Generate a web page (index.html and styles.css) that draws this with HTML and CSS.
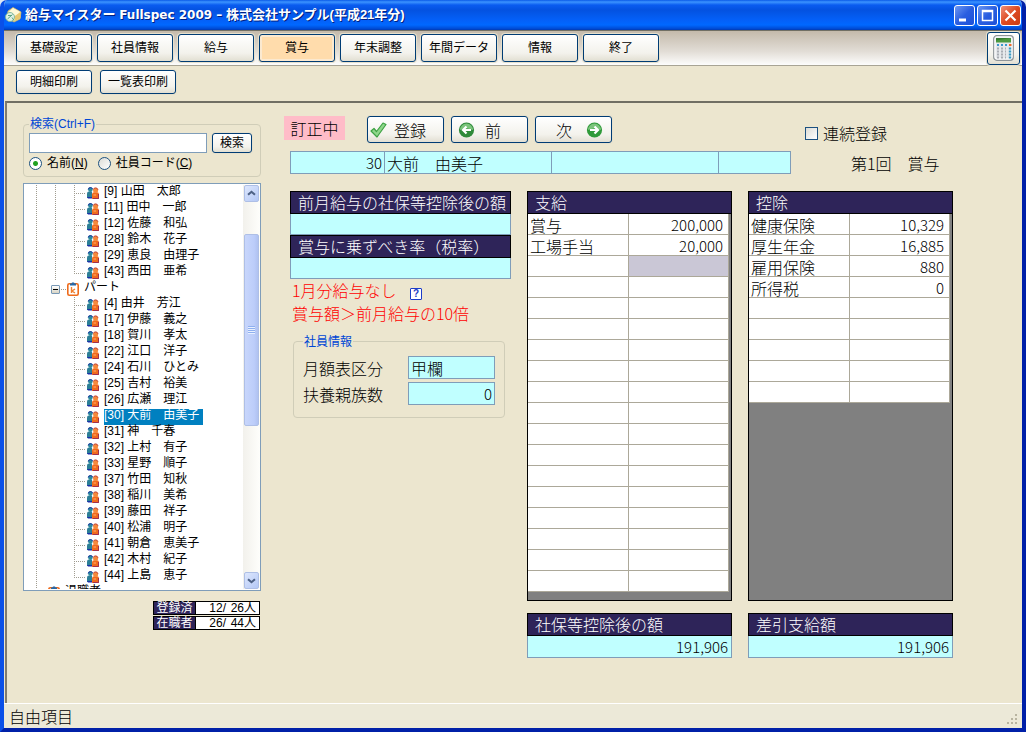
FILE: index.html
```html
<!DOCTYPE html>
<html lang="ja">
<head>
<meta charset="utf-8">
<title>給与マイスター Fullspec 2009</title>
<meta name="viewport" content="width=device-width, initial-scale=1">
<link rel="stylesheet" href="styles.css">
</head>
<body>
<svg class="sprite" aria-hidden="true">
  <symbol id="people" viewBox="0 0 12 12">
    <path d="M0 6.5Q0 4.5 2 4.5H5V11H0Z" fill="#2c7f96"/>
    <path d="M0 10h6v1.5H1Z" fill="#1a2fa8"/>
    <circle cx="3.4" cy="2.6" r="2.3" fill="#2a8a9c"/>
    <path d="M1.2 2.4A2.3 2.3 0 0 1 5.6 2" fill="none" stroke="#1a35a0" stroke-width="1"/>
    <path d="M5 12V7.5Q5 5.3 7.2 5.3H10Q12 5.3 12 7.5V12Z" fill="#f06a1c"/>
    <circle cx="8.6" cy="3.4" r="2.5" fill="#f58a3c"/>
    <path d="M6.2 2.6A2.5 2.5 0 0 1 11 2.8" fill="none" stroke="#c03c2a" stroke-width="1"/>
    <path d="M6.5 8h2.6" stroke="#ffb070" stroke-width="1"/>
    <path d="M11.5 7v4.5H6" fill="none" stroke="#a03050" stroke-width="1"/>
  </symbol>
  <symbol id="clip" viewBox="0 0 12 14">
    <rect x="0.8" y="1.8" width="10.4" height="11.4" rx="1.5" fill="#fff" stroke="#ee6a1a" stroke-width="1.6"/>
    <path d="M3 3.5V1.5H4.5L5 0.5H7L7.500 1.500H9V3.500Z" fill="#2468a8"/>
    <path d="M4.500 5V11M8 7L5 9L8 11" fill="none" stroke="#f08030" stroke-width="1.400"/>
  </symbol>
</svg>

<div class="window">
  <header class="titlebar">
    <svg class="titlebar__icon" viewBox="0 0 17 16" aria-hidden="true">
      <path d="M3 4L8 0.500L16 5L15 12L9 15L2 11Z" fill="#f3e6a0" stroke="#c9b26a" stroke-width="0.800"/>
      <path d="M8 1L15.500 5L10 9L4 5Z" fill="#fff8d8"/>
      <path d="M10 9L15.500 5V11L10 14Z" fill="#e8c870"/>
      <circle cx="5" cy="10" r="4.500" fill="#dff0e4" stroke="#7cb498" stroke-width="0.900"/>
      <path d="M2.500 12L7.500 7.500M3 8.500h4M7 10.500l2 3" stroke="#5aa482" stroke-width="1"/>
    </svg>
    <h1 class="titlebar__text">給与マイスター <span class="titlebar__latin">Fullspec 2009 –</span> 株式会社サンプル(平成21年分)</h1>
    <div class="titlebar__controls">
      <button class="winbtn" type="button" aria-label="最小化"><svg viewBox="0 0 19 19"><path d="M4 14h7" stroke="#fff" stroke-width="3"/></svg></button>
      <button class="winbtn" type="button" aria-label="最大化"><svg viewBox="0 0 19 19"><path d="M4.500 4.500h10v10h-10ZM4 5.500h11" fill="none" stroke="#fff" stroke-width="1.500"/></svg></button>
      <button class="winbtn winbtn--close" type="button" aria-label="閉じる"><svg viewBox="0 0 19 19"><path d="M4.500 4.500L14.500 14.500M14.500 4.500L4.500 14.500" stroke="#fff" stroke-width="2.200"/></svg></button>
    </div>
  </header>

  <nav class="toolbar">
    <button class="btn btn--nav" type="button">基礎設定</button>
    <button class="btn btn--nav" type="button">社員情報</button>
    <button class="btn btn--nav" type="button">給与</button>
    <button class="btn btn--nav btn--active" type="button" aria-current="page">賞与</button>
    <button class="btn btn--nav" type="button">年末調整</button>
    <button class="btn btn--nav" type="button">年間データ</button>
    <button class="btn btn--nav" type="button">情報</button>
    <button class="btn btn--nav" type="button">終了</button>
    <button class="btn btn--calc" type="button" aria-label="電卓">
      <svg viewBox="0 0 21 26" aria-hidden="true">
        <rect x="0.700" y="0.700" width="19.600" height="24.600" rx="3" fill="#e6e9ec" stroke="#8e9498" stroke-width="1.200"/>
        <rect x="2" y="2" width="17" height="22" rx="2" fill="none" stroke="#fff"/>
        <rect x="3" y="3" width="15" height="4.500" fill="#4c9a40"/>
        <path d="M3 5.500L18 3V3H3Z" fill="#377c30"/>
        <g stroke-width="2" stroke-dasharray="2 2">
          <path d="M4 10h11" stroke="#3c98cc"/>
          <path d="M4 13.500h9M4 16.500h9M4 19.500h9M4 22.500h9" stroke="#a9adb4"/>
        </g>
        <path d="M16 10h2.500" stroke="#f06a2a" stroke-width="2"/>
        <path d="M17 12.500V23.500" stroke="#3a9cc4" stroke-width="2.400" stroke-dasharray="2 1"/>
      </svg>
    </button>
  </nav>

  <div class="subbar">
    <button class="btn btn--sub" type="button">明細印刷</button>
    <button class="btn btn--sub" type="button">一覧表印刷</button>
  </div>

  <main class="main">
    <aside class="sidebar">
      <fieldset class="group search">
        <legend class="group__legend">検索(Ctrl+F)</legend>
        <div class="search__row">
          <input class="search__input" type="text" aria-label="検索(Ctrl+F)">
          <button class="btn btn--find" type="button">検索</button>
        </div>
        <div class="search__modes">
          <label class="radio"><input type="radio" name="mode" checked>名前(<u>N</u>)</label>
          <label class="radio"><input type="radio" name="mode">社員コード(<u>C</u>)</label>
        </div>
      </fieldset>

      <div class="tree">
        <ul class="tree__list">
          <li class="row"><i class="guide"></i><i class="guide"></i><i class="guide guide--leaf"></i><svg class="row__icon"><use href="#people"/></svg><a class="row__link" href="#e9">[9] 山田　太郎</a></li>
          <li class="row"><i class="guide"></i><i class="guide"></i><i class="guide guide--leaf"></i><svg class="row__icon"><use href="#people"/></svg><a class="row__link" href="#e11">[11] 田中　一郎</a></li>
          <li class="row"><i class="guide"></i><i class="guide"></i><i class="guide guide--leaf"></i><svg class="row__icon"><use href="#people"/></svg><a class="row__link" href="#e12">[12] 佐藤　和弘</a></li>
          <li class="row"><i class="guide"></i><i class="guide"></i><i class="guide guide--leaf"></i><svg class="row__icon"><use href="#people"/></svg><a class="row__link" href="#e28">[28] 鈴木　花子</a></li>
          <li class="row"><i class="guide"></i><i class="guide"></i><i class="guide guide--leaf"></i><svg class="row__icon"><use href="#people"/></svg><a class="row__link" href="#e29">[29] 恵良　由理子</a></li>
          <li class="row"><i class="guide"></i><i class="guide"></i><i class="guide guide--leaf guide--last"></i><svg class="row__icon"><use href="#people"/></svg><a class="row__link" href="#e43">[43] 西田　亜希</a></li>
          <li class="row"><i class="guide"></i><i class="guide guide--node"><button class="toggle" type="button" aria-label="パートを折りたたむ"></button></i><svg class="row__icon row__icon--clip"><use href="#clip"/></svg><a class="row__link" href="#part">パート</a></li>
          <li class="row"><i class="guide"></i><i class="guide guide--none"></i><i class="guide guide--leaf"></i><svg class="row__icon"><use href="#people"/></svg><a class="row__link" href="#e4">[4] 由井　芳江</a></li>
          <li class="row"><i class="guide"></i><i class="guide guide--none"></i><i class="guide guide--leaf"></i><svg class="row__icon"><use href="#people"/></svg><a class="row__link" href="#e17">[17] 伊藤　義之</a></li>
          <li class="row"><i class="guide"></i><i class="guide guide--none"></i><i class="guide guide--leaf"></i><svg class="row__icon"><use href="#people"/></svg><a class="row__link" href="#e18">[18] 賀川　孝太</a></li>
          <li class="row"><i class="guide"></i><i class="guide guide--none"></i><i class="guide guide--leaf"></i><svg class="row__icon"><use href="#people"/></svg><a class="row__link" href="#e22">[22] 江口　洋子</a></li>
          <li class="row"><i class="guide"></i><i class="guide guide--none"></i><i class="guide guide--leaf"></i><svg class="row__icon"><use href="#people"/></svg><a class="row__link" href="#e24">[24] 石川　ひとみ</a></li>
          <li class="row"><i class="guide"></i><i class="guide guide--none"></i><i class="guide guide--leaf"></i><svg class="row__icon"><use href="#people"/></svg><a class="row__link" href="#e25">[25] 吉村　裕美</a></li>
          <li class="row"><i class="guide"></i><i class="guide guide--none"></i><i class="guide guide--leaf"></i><svg class="row__icon"><use href="#people"/></svg><a class="row__link" href="#e26">[26] 広瀬　理江</a></li>
          <li class="row"><i class="guide"></i><i class="guide guide--none"></i><i class="guide guide--leaf"></i><svg class="row__icon"><use href="#people"/></svg><a class="row__link row__link--selected" href="#e30" aria-current="true">[30] 大前　由美子</a></li>
          <li class="row"><i class="guide"></i><i class="guide guide--none"></i><i class="guide guide--leaf"></i><svg class="row__icon"><use href="#people"/></svg><a class="row__link" href="#e31">[31] 神　千春</a></li>
          <li class="row"><i class="guide"></i><i class="guide guide--none"></i><i class="guide guide--leaf"></i><svg class="row__icon"><use href="#people"/></svg><a class="row__link" href="#e32">[32] 上村　有子</a></li>
          <li class="row"><i class="guide"></i><i class="guide guide--none"></i><i class="guide guide--leaf"></i><svg class="row__icon"><use href="#people"/></svg><a class="row__link" href="#e33">[33] 星野　順子</a></li>
          <li class="row"><i class="guide"></i><i class="guide guide--none"></i><i class="guide guide--leaf"></i><svg class="row__icon"><use href="#people"/></svg><a class="row__link" href="#e37">[37] 竹田　知秋</a></li>
          <li class="row"><i class="guide"></i><i class="guide guide--none"></i><i class="guide guide--leaf"></i><svg class="row__icon"><use href="#people"/></svg><a class="row__link" href="#e38">[38] 稲川　美希</a></li>
          <li class="row"><i class="guide"></i><i class="guide guide--none"></i><i class="guide guide--leaf"></i><svg class="row__icon"><use href="#people"/></svg><a class="row__link" href="#e39">[39] 藤田　祥子</a></li>
          <li class="row"><i class="guide"></i><i class="guide guide--none"></i><i class="guide guide--leaf"></i><svg class="row__icon"><use href="#people"/></svg><a class="row__link" href="#e40">[40] 松浦　明子</a></li>
          <li class="row"><i class="guide"></i><i class="guide guide--none"></i><i class="guide guide--leaf"></i><svg class="row__icon"><use href="#people"/></svg><a class="row__link" href="#e41">[41] 朝倉　恵美子</a></li>
          <li class="row"><i class="guide"></i><i class="guide guide--none"></i><i class="guide guide--leaf"></i><svg class="row__icon"><use href="#people"/></svg><a class="row__link" href="#e42">[42] 木村　紀子</a></li>
          <li class="row"><i class="guide"></i><i class="guide guide--none"></i><i class="guide guide--leaf guide--last"></i><svg class="row__icon"><use href="#people"/></svg><a class="row__link" href="#e44">[44] 上島　恵子</a></li>
          <li class="row"><i class="guide guide--short"></i><svg class="row__icon row__icon--clip"><use href="#clip"/></svg><a class="row__link" href="#retired">退職者</a></li>
        </ul>
        <div class="scroll">
          <button class="scroll__btn" type="button" aria-label="上へ"><svg viewBox="0 0 15 15"><path d="M3.500 9L7.500 5.500L11.500 9" fill="none" stroke="#4d6185" stroke-width="2.400"/></svg></button>
          <div class="scroll__track"><div class="scroll__thumb"></div></div>
          <button class="scroll__btn" type="button" aria-label="下へ"><svg viewBox="0 0 15 15"><path d="M3.500 6L7.500 9.500L11.500 6" fill="none" stroke="#4d6185" stroke-width="2.400"/></svg></button>
        </div>
      </div>

      <dl class="counts">
        <div class="counts__row"><dt>登録済</dt><dd><span>12/</span><span>26人</span></dd></div>
        <div class="counts__row"><dt>在職者</dt><dd><span>26/</span><span>44人</span></dd></div>
      </dl>
    </aside>

    <section class="form">
      <div class="actions">
        <span class="badge">訂正中</span>
        <div class="actions__buttons">
          <button class="btn btn--act" type="button">
            <svg class="act-icon" viewBox="0 0 17 16"><path d="M1 9L4 6.500L6.500 9.500L13 1L16 2.500L7 15Z" fill="#8ed68a" stroke="#3ea244" stroke-width="1.200" stroke-linejoin="round"/></svg>
            登録</button>
          <button class="btn btn--act btn--prev" type="button">
            <svg class="act-icon" viewBox="0 0 16 16"><circle cx="8" cy="8" r="7.600" fill="#2f8a3a"/><path d="M1.500 8A6.500 6.500 0 0 1 14.500 8Q8 5 1.500 8Z" fill="#7cc47c"/><path d="M12.500 8H5M8 4.500L4.500 8L8 11.500" fill="none" stroke="#fff" stroke-width="2.200"/></svg>
            前</button>
          <button class="btn btn--act btn--next" type="button">次
            <svg class="act-icon" viewBox="0 0 16 16"><circle cx="8" cy="8" r="7.600" fill="#2f9a3a"/><path d="M1.500 8A6.500 6.500 0 0 1 14.500 8Q8 5 1.500 8Z" fill="#7cc47c"/><path d="M3.500 8H11M8 4.500L11.500 8L8 11.500" fill="none" stroke="#fff" stroke-width="2.200"/></svg></button>
        </div>
        <label class="check"><input type="checkbox">連続登録</label>
      </div>

      <div class="identity">
        <div class="identity__fields">
          <input class="field field--num" type="text" readonly value="30" aria-label="社員コード">
          <input class="field" type="text" readonly value="大前　由美子" aria-label="氏名">
          <input class="field" type="text" readonly value="" aria-label="部門">
          <input class="field" type="text" readonly value="" aria-label="区分">
        </div>
        <p class="identity__round">第1回　賞与</p>
      </div>

      <div class="sheet">
        <div class="base">
          <label class="caption" for="prev">前月給与の社保等控除後の額</label>
          <input class="field field--under" id="prev" type="text" readonly>
          <label class="caption" for="rate">賞与に乗ずべき率（税率）</label>
          <input class="field field--under" id="rate" type="text" readonly>
          <p class="warn">1月分給与なし <button class="help" type="button" aria-label="ヘルプ">?</button></p>
          <p class="warn">賞与額＞前月給与の10倍</p>
          <fieldset class="group person">
            <legend class="group__legend">社員情報</legend>
            <div class="person__row"><label for="kubun">月額表区分</label><input class="field" id="kubun" type="text" readonly value="甲欄"></div>
            <div class="person__row"><label for="fuyo">扶養親族数</label><input class="field field--num" id="fuyo" type="text" readonly value="0"></div>
          </fieldset>
        </div>

        <div class="ledger">
          <h2 class="caption">支給</h2>
          <div class="ledger__body">
            <table class="grid">
              <tr><td>賞与</td><td class="num">200,000</td></tr>
              <tr><td>工場手当</td><td class="num">20,000</td></tr>
              <tr><td></td><td class="cell-focus"></td></tr>
              <tr><td></td><td></td></tr>
              <tr><td></td><td></td></tr>
              <tr><td></td><td></td></tr>
              <tr><td></td><td></td></tr>
              <tr><td></td><td></td></tr>
              <tr><td></td><td></td></tr>
              <tr><td></td><td></td></tr>
              <tr><td></td><td></td></tr>
              <tr><td></td><td></td></tr>
              <tr><td></td><td></td></tr>
              <tr><td></td><td></td></tr>
              <tr><td></td><td></td></tr>
              <tr><td></td><td></td></tr>
              <tr><td></td><td></td></tr>
              <tr><td></td><td></td></tr>
            </table>
          </div>
        </div>

        <div class="ledger">
          <h2 class="caption">控除</h2>
          <div class="ledger__body">
            <table class="grid">
              <tr><td>健康保険</td><td class="num">10,329</td></tr>
              <tr><td>厚生年金</td><td class="num">16,885</td></tr>
              <tr><td>雇用保険</td><td class="num">880</td></tr>
              <tr><td>所得税</td><td class="num">0</td></tr>
              <tr><td></td><td></td></tr>
              <tr><td></td><td></td></tr>
              <tr><td></td><td></td></tr>
              <tr><td></td><td></td></tr>
              <tr><td></td><td></td></tr>
            </table>
          </div>
        </div>

        <div class="total total--first">
          <label class="caption" for="net1">社保等控除後の額</label>
          <input class="field field--under field--num" id="net1" type="text" readonly value="191,906">
        </div>
        <div class="total">
          <label class="caption" for="net2">差引支給額</label>
          <input class="field field--under field--num" id="net2" type="text" readonly value="191,906">
        </div>
      </div>
    </section>
  </main>

  <footer class="status">
    <span>自由項目</span>
    <svg class="status__grip" viewBox="0 0 12 12" aria-hidden="true"><path d="M9 1h2v2h-2ZM5 5h2v2h-2ZM9 5h2v2h-2ZM1 9h2v2h-2ZM5 9h2v2h-2ZM9 9h2v2h-2Z" fill="#b8b4a0"/></svg>
  </footer>
</div>
</body>
</html>
```
FILE: styles.css
```css
* { box-sizing: border-box; }

body {
  margin: 0;
  background: #dfe8f4;
  color: #000;
  font: 12px/14px "Liberation Sans", "Noto Sans CJK JP", sans-serif;
}

button, input { font: inherit; color: inherit; margin: 0; }
h1, h2, p, ul, dl, dd { margin: 0; padding: 0; }
ul { list-style: none; }
.sprite { position: absolute; width: 0; height: 0; }

.window {
  min-height: 100vh;
  display: flex;
  flex-direction: column;
  border: solid #0a2fd0;
  border-color: #0a5ae8 #0020a8 #0020a8 #0a50e8;
  border-width: 0 4px 4px;
  border-radius: 7px 7px 0 0;
  background: #ece6cf;
  overflow: hidden;
}

/* Title bar */
.titlebar {
  display: flex;
  align-items: center;
  height: 30px;
  margin: 0 -4px;
  padding: 0 5px;
  background: linear-gradient(#0a5ae8 0, #3c94ff 2px, #0a5cf0 5px, #0452e0 10px, #0460f8 20px, #0068ff 25px, #0048d0 29px, #0038b0 30px);
}
.titlebar__icon { width: 17px; height: 16px; }
.titlebar__text {
  flex: 1;
  padding-left: 3px;
  color: #fff;
  font-size: 13px;
  font-weight: 700;
  line-height: 18px;
  text-shadow: 1px 1px 0 #002080;
}
.titlebar__latin { font-family: "DejaVu Sans", sans-serif; font-size: 12px; }
.titlebar__controls { display: flex; gap: 2px; }
.winbtn {
  width: 21px;
  height: 21px;
  padding: 0;
  border: 1px solid #fff;
  border-radius: 3px;
  background: linear-gradient(135deg, #6d98f2, #2a5ee0 50%, #1c50d8);
}
.winbtn--close { background: linear-gradient(135deg, #f0907a, #dd4a22 50%, #c83c14); }
.winbtn svg { display: block; width: 19px; height: 19px; }

/* Buttons */
.btn {
  padding: 0;
  border: 1px solid #003c74;
  border-radius: 3px;
  background: linear-gradient(#fff, #f3f2ec 70%, #e2dfd2);
  box-shadow: 0 0 0 1px #e6e0cc;
}
.btn--nav { width: 76px; height: 28px; }
.btn--active { background: #ffdcac; box-shadow: 0 0 0 1px #e6e0cc, inset 0 0 0 2px #fbe9d0; }
.btn--sub { width: 76px; height: 24px; }
.btn--find { width: 40px; height: 20px; }
.btn--calc {
  display: grid;
  place-items: center;
  width: 33px;
  height: 33px;
  margin-left: auto;
}
.btn--calc svg { width: 21px; height: 26px; }

/* Bars */
.toolbar {
  display: flex;
  align-items: center;
  gap: 5px;
  height: 36px;
  padding: 0 2px 0 12px;
  border-top: 1px solid #716f64;
  border-bottom: 1px solid #a8a494;
  background: linear-gradient(#c4baab, #e2ddd6 60%, #fdfdfc);
}
.subbar {
  display: flex;
  align-items: flex-start;
  gap: 8px;
  height: 35px;
  padding: 4px 12px;
}

/* Main */
.main {
  flex: 1;
  display: flex;
  align-items: flex-start;
  gap: 23px;
  margin-left: 1px;
  padding: 13px 69px 40px 16px;
  border-top: 2px solid #716f64;
  border-left: 2px solid #807c70;
}
.sidebar { flex: none; width: 238px; padding-top: 1px; }

.group {
  min-width: 0;
  margin: 0;
  border: 1px solid #d0cdb8;
  border-radius: 4px;
}
.group__legend { padding: 0 1px; color: #0046d5; }

.search { padding: 2px 8px 6px 5px; }
.search__row { display: flex; gap: 5px; }
.search__input {
  flex: 1;
  min-width: 0;
  height: 20px;
  padding: 0 3px;
  border: 1px solid #7f9db9;
  background: #fff;
}
.search__modes { display: flex; gap: 10px; margin-top: 3px; }
.radio { display: flex; align-items: center; }
.radio input {
  appearance: none;
  width: 13px;
  height: 13px;
  margin-right: 5px;
  border: 1px solid #1c5180;
  border-radius: 50%;
  background: linear-gradient(135deg, #dcdcd6, #fff);
}
.radio input:checked { background: radial-gradient(circle, #21a121 0 2px, #fff 3px); }

/* Employee tree */
.tree {
  display: flex;
  height: 408px;
  margin-top: 6px;
  padding: 1px 0 1px;
  border: 1px solid #7f9db9;
  background: #fff;
}
.tree__list { flex: 1; min-width: 0; padding-left: 12px; overflow: hidden; }
.row { display: flex; align-items: flex-start; height: 16px; white-space: nowrap; }
.row__icon { flex: none; width: 12px; height: 12px; margin-top: 2px; }
.row__icon--clip { height: 14px; margin-top: 1px; }
.row__link {
  margin-left: 5px;
  height: 16px;
  line-height: 13px;
  color: #000;
  text-decoration: none;
}
.row__link--selected { padding-right: 4px; background: #0080c0; color: #fff; }
.guide {
  flex: none;
  width: 19px;
  height: 16px;
  background: repeating-linear-gradient(#a09c90 0 1px, transparent 1px 2px) 0 0 / 1px 100% no-repeat;
}
.guide--none { background: none; }
.guide--short { width: 12px; }
.guide--leaf {
  width: 13px;
  background:
    repeating-linear-gradient(#a09c90 0 1px, transparent 1px 2px) 0 0 / 1px 100% no-repeat,
    repeating-linear-gradient(90deg, #a09c90 0 1px, transparent 1px 2px) 0 8px / 12px 1px no-repeat;
}
.guide--last {
  background:
    repeating-linear-gradient(#a09c90 0 1px, transparent 1px 2px) 0 0 / 1px 8px no-repeat,
    repeating-linear-gradient(90deg, #a09c90 0 1px, transparent 1px 2px) 0 8px / 12px 1px no-repeat;
}
.guide--node {
  width: 12px;
  background: repeating-linear-gradient(90deg, #a09c90 0 1px, transparent 1px 2px) 0 8px / 12px 1px no-repeat;
}
.toggle {
  display: block;
  width: 9px;
  height: 9px;
  margin: 4px 0 0 -4px;
  padding: 0;
  border: 1px solid #7898b5;
  border-radius: 1px;
  background: linear-gradient(#000, #000) 1px 3px / 5px 1px no-repeat, linear-gradient(#fff, #d8d4c4);
}

.scroll {
  display: flex;
  flex-direction: column;
  width: 17px;
  background: linear-gradient(90deg, #f2f1ec, #fefefb);
}
.scroll__btn {
  width: 15px;
  height: 17px;
  margin: 0 1px;
  padding: 0;
  border: 1px solid #aebfe6;
  border-radius: 2px;
  background: linear-gradient(135deg, #dde7fd, #b4c8f6);
}
.scroll__btn svg { display: block; width: 13px; height: 15px; }
.scroll__track { flex: 1; padding-top: 32px; }
.scroll__thumb {
  height: 192px;
  margin: 0 1px;
  border: 1px solid #aebfe6;
  border-radius: 2px;
  background:
    repeating-linear-gradient(#8fb0f0 0 1px, #e8f0ff 1px 2px) 50% 50% / 7px 8px no-repeat,
    linear-gradient(90deg, #c8d6fb, #bccdfa 70%, #b0c2f0);
}

.counts { display: grid; gap: 1px; width: 107px; margin: 10px 1px 0 auto; }
.counts__row {
  display: grid;
  grid-template-columns: 42px 1fr;
  height: 14px;
  border: 1px solid #000;
  background: #fff;
  line-height: 12px;
}
.counts__row dt { border-right: 1px solid #000; background: #2e2459; color: #fff; text-align: center; }
.counts__row dd { display: grid; grid-template-columns: 1fr 1fr; padding-right: 3px; text-align: right; }

/* Form */
.form,
.status { font: 300 16px/20px "Noto Sans CJK JP", sans-serif; }
.form { flex: 1; min-width: 0; }
.actions { display: flex; align-items: flex-start; }
.badge { width: 61px; padding: 2px 0; background: #ffbcc8; text-align: center; }
.actions__buttons { display: flex; gap: 7px; margin-left: 22px; }
.btn--act {
  display: flex;
  align-items: center;
  gap: 7px;
  width: 77px;
  height: 27px;
  padding-left: 2px;
}
.btn--prev { gap: 10px; padding-left: 6px; }
.btn--next { gap: 14px; padding-left: 20px; }
.act-icon { width: 17px; height: 16px; }
.check {
  display: flex;
  align-items: center;
  align-self: flex-end;
  margin: 0 66px 0 auto;
}
.check input {
  appearance: none;
  width: 13px;
  height: 13px;
  margin-right: 5px;
  border: 1px solid #1c5180;
  background: linear-gradient(135deg, #dcdcd6, #fff);
}

.field {
  width: 100%;
  min-width: 0;
  height: 23px;
  padding: 0 2px;
  border: 1px solid #7f9db9;
  border-radius: 0;
  background: #c0ffff;
}
.field--num { text-align: right; font-size: 15px; }
.field--under { display: block; height: 22px; border-top: 0; padding-right: 3px; }

.identity { display: flex; align-items: center; gap: 60px; margin-top: 8px; padding-left: 6px; }
.identity__fields {
  flex: 1;
  display: grid;
  grid-template-columns: 95fr 167fr 167fr 72fr;
}
.identity__fields .field + .field { border-left: 0; }
.identity__round { width: 102px; white-space: nowrap; }

.sheet {
  display: grid;
  grid-template-columns: 221px minmax(0, 1fr) minmax(0, 1fr);
  gap: 12px 16px;
  margin-top: 17px;
  padding-left: 6px;
}
.caption {
  display: block;
  height: 23px;
  padding-left: 7px;
  border: 1px solid #000;
  background: #2e2459;
  color: #fff;
  font-size: 16px;
  font-weight: 300;
  line-height: 21px;
  white-space: nowrap;
}
.base .field--under { height: 21px; }
.warn { padding-left: 2px; color: #f00; line-height: 23px; white-space: nowrap; }
.help {
  width: 12px;
  height: 12px;
  margin-left: 10px;
  padding: 0;
  border: 1px solid #1c3cc8;
  border-radius: 1px;
  background: #fff;
  color: #1c3cc8;
  font-family: "Liberation Sans", sans-serif;
  font-size: 10px;
  font-weight: 700;
  line-height: 10px;
}
.person { margin: 9px 6px 0 3px; padding: 8px 9px 12px; }
.person .group__legend { font-size: 12px; font-weight: 400; line-height: 14px; }
.person__row { display: grid; grid-template-columns: 1fr 87px; align-items: center; }
.person__row + .person__row { margin-top: 3px; }

.ledger { display: flex; flex-direction: column; }
.ledger__body {
  flex: 1;
  padding: 0 2px 8px 0;
  border: 1px solid #000;
  border-top: 0;
  background: #808080;
}
.grid { width: 100%; border-collapse: separate; border-spacing: 0; table-layout: fixed; background: #fff; }
.grid td {
  height: 21px;
  padding: 2px 2px 0;
  border: solid #aca899;
  border-width: 0 1px 1px 0;
  line-height: 18px;
}
.grid .num { padding-right: 5px; font-size: 15px; text-align: right; }
.grid .cell-focus { background: #cac7d6; }
.total--first { grid-column: 2; }

/* Status bar */
.status {
  display: flex;
  align-items: center;
  justify-content: space-between;
  height: 25px;
  padding: 0 4px 0 5px;
  border-top: 1px solid #fff;
  background: #ece9d8;
}
.status__grip { align-self: flex-end; width: 12px; height: 12px; margin-bottom: 3px; }
```
